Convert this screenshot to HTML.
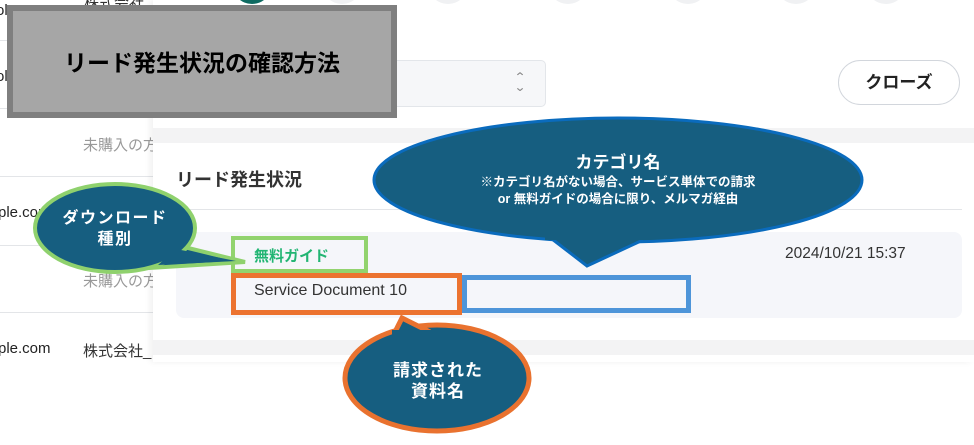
<!DOCTYPE html>
<html><head><meta charset="utf-8"><style>
body{margin:0;width:974px;height:445px;overflow:hidden;background:#fff;font-family:"Liberation Sans","Noto Sans CJK JP",sans-serif;position:relative}
.a{position:absolute}
.ln{position:absolute;left:0;width:153px;height:1px;background:#e3e5e8}
</style></head><body>
<div class="ln" style="top:40px"></div><div class="ln" style="top:108px"></div><div class="ln" style="top:176px"></div><div class="ln" style="top:245px"></div><div class="ln" style="top:312px"></div>
<div class="a" style="left:84px;top:-8px;font-size:15px;color:#333">株式会社</div>
<div class="a" style="left:-4px;top:2px;font-size:15px;color:#222">ol</div>
<div class="a" style="left:-4px;top:68px;font-size:15px;color:#222">ol</div>
<div class="a" style="left:83px;top:134px;font-size:15px;color:#999">未購入の方</div>
<div class="a" style="left:-2px;top:204px;font-size:15px;color:#222">ple.com</div>
<div class="a" style="left:83px;top:270px;font-size:15px;color:#999">未購入の方</div>
<div class="a" style="left:-2px;top:340px;font-size:15px;color:#222">ple.com</div>
<div class="a" style="left:83px;top:340px;font-size:15px;color:#333">株式会社_</div>
<div class="a" style="left:153px;top:0;width:821px;height:362px;background:#fff;box-shadow:-3px 0 6px rgba(0,0,0,.06)"></div>
<div class="a" style="left:153px;top:128px;width:821px;height:15px;background:#f3f3f4"></div>
<div class="a" style="left:153px;top:340px;width:821px;height:15px;background:#f3f3f4"></div>
<div class="a" style="left:232px;top:-36px;width:40px;height:40px;border-radius:50%;background:#0f6b62"></div>
<div class="a" style="left:322px;top:-36px;width:40px;height:40px;border-radius:50%;background:#f0f1f3"></div>
<div class="a" style="left:428px;top:-36px;width:40px;height:40px;border-radius:50%;background:#f0f1f3"></div>
<div class="a" style="left:548px;top:-36px;width:40px;height:40px;border-radius:50%;background:#f0f1f3"></div>
<div class="a" style="left:668px;top:-36px;width:40px;height:40px;border-radius:50%;background:#f0f1f3"></div>
<div class="a" style="left:776px;top:-36px;width:40px;height:40px;border-radius:50%;background:#f0f1f3"></div>
<div class="a" style="left:866px;top:-36px;width:40px;height:40px;border-radius:50%;background:#f0f1f3"></div>
<div class="a" style="left:380px;top:60px;width:164px;height:45px;background:#f6f7f9;border:1px solid #e3e6ea;border-radius:5px"></div>
<div class="a" style="left:515px;top:72px;font-size:12px;color:#888;line-height:10px;transform:scaleX(1.2)">⌃<br>⌄</div>
<div class="a" style="left:838px;top:60px;width:122px;height:45px;border:1px solid #d2d6dc;border-radius:24px;box-sizing:border-box;text-align:center;line-height:43px;font-size:17px;font-weight:bold;color:#222">クローズ</div>
<div class="a" style="left:176px;top:166px;font-size:18px;font-weight:bold;color:#333">リード発生状況</div>
<div class="a" style="left:176px;top:209px;width:786px;height:1px;background:#e3e5e8"></div>
<div class="a" style="left:176px;top:232px;width:786px;height:86px;background:#f5f6fa;border-radius:8px"></div>
<div class="a" style="left:785px;top:245px;font-size:15.5px;color:#333">2024/10/21 15:37</div>
<div class="a" style="left:231px;top:236px;width:137px;height:37px;border:4px solid #92d36e;box-sizing:border-box;background:#f5f6fa"></div>
<div class="a" style="left:254px;top:245px;font-size:15px;font-weight:bold;color:#22b573">無料ガイド</div>
<div class="a" style="left:231px;top:273px;width:231px;height:42px;border:5px solid #ec7330;box-sizing:border-box"></div>
<div class="a" style="left:254px;top:282px;font-size:16px;color:#333">Service Document 10</div>
<div class="a" style="left:462px;top:275px;width:229px;height:38px;border:5px solid #4e95d9;box-sizing:border-box"></div>
<div class="a" style="left:7px;top:5px;width:390px;height:113px;background:#a6a6a6;border:6px solid #7f7f7f;box-sizing:border-box;text-align:center;line-height:104px;font-size:23px;font-weight:bold;color:#000">リード発生状況の確認方法</div>
<svg class="a" style="left:0;top:0" width="974" height="445">
<path d="M180,246 L245,262 L150,268 Z" fill="#165e80" stroke="#8fd16d" stroke-width="4" stroke-linejoin="miter"/>
<ellipse cx="115" cy="228" rx="80" ry="44" fill="#165e80" stroke="#8fd16d" stroke-width="4"/>
<path d="M176,249 L236,261 L158,265 Z" fill="#165e80"/>
<ellipse cx="618" cy="180" rx="244" ry="62" fill="#165e80" stroke="#0a6bbd" stroke-width="3"/>
<path d="M552,239 L587,266 L643,240" fill="#165e80" stroke="#0a6bbd" stroke-width="3"/>
<rect x="545" y="228" width="105" height="12" fill="#165e80"/>
<ellipse cx="437" cy="378" rx="92" ry="53" fill="#165e80" stroke="#e9722f" stroke-width="5"/>
<path d="M395,332 L402,318 L430,332" fill="#165e80" stroke="#e9722f" stroke-width="5"/>
<rect x="392" y="330" width="46" height="10" fill="#165e80"/>
</svg>
<div class="a" style="left:40px;top:208px;width:150px;text-align:center;color:#fff;font-weight:bold;font-size:16px;line-height:21px;letter-spacing:1.5px">ダウンロード<br>種別</div>
<div class="a" style="left:380px;top:152px;width:476px;text-align:center;color:#fff;font-weight:bold">
<div style="font-size:17px;line-height:22px">カテゴリ名</div>
<div style="font-size:12.5px;line-height:17px">※カテゴリ名がない場合、サービス単体での請求<br>or 無料ガイドの場合に限り、メルマガ経由</div></div>
<div class="a" style="left:360px;top:360px;width:156px;text-align:center;color:#fff;font-weight:bold;font-size:17px;line-height:21px;letter-spacing:1px">請求された<br>資料名</div>
</body></html>
